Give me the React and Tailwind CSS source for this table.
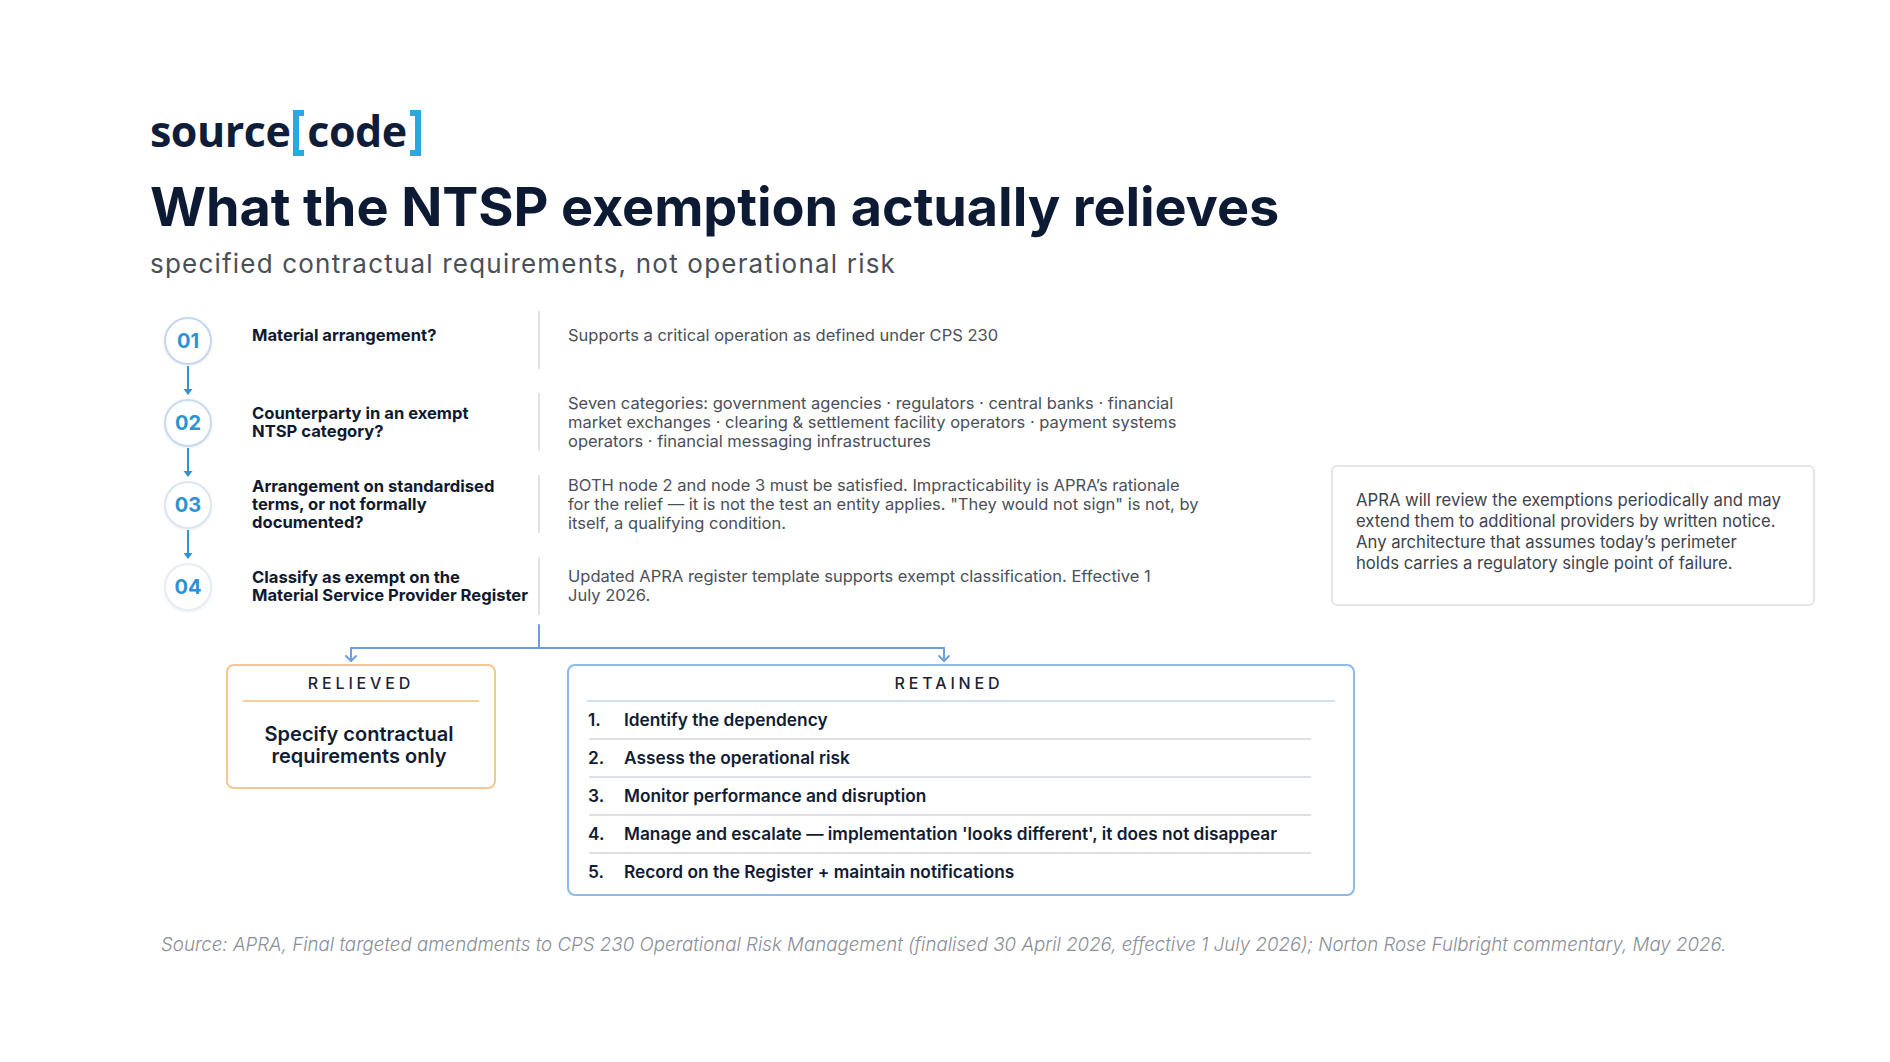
const steps = [
  {
    n: "01",
    ring: "border-[#c3d8ee]",
    shift: "pb-[10px]",
    label: ["Material arrangement?"],
    desc: ["Supports a critical operation as defined under CPS 230"],
  },
  {
    n: "02",
    ring: "border-[#c8daee]",
    shift: "",
    label: ["Counterparty in an exempt", "NTSP category?"],
    desc: [
      "Seven categories: government agencies · regulators · central banks · financial",
      "market exchanges · clearing & settlement facility operators · payment systems",
      "operators · financial messaging infrastructures",
    ],
  },
  {
    n: "03",
    ring: "border-[#dde6f0]",
    shift: "",
    label: ["Arrangement on standardised", "terms, or not formally", "documented?"],
    desc: [
      "BOTH node 2 and node 3 must be satisfied. Impracticability is APRA’s rationale",
      "for the relief — it is not the test an entity applies. \"They would not sign\" is not, by",
      "itself, a qualifying condition.",
    ],
  },
  {
    n: "04",
    ring: "border-[#e8edf3]",
    shift: "",
    label: ["Classify as exempt on the", "Material Service Provider Register"],
    desc: ["Updated APRA register template supports exempt classification. Effective 1", "July 2026."],
  },
];

const retained = [
  "Identify the dependency",
  "Assess the operational risk",
  "Monitor performance and disruption",
  "Manage and escalate — implementation 'looks different', it does not disappear",
  "Record on the Register + maintain notifications",
];

function Lines({ lines }) {
  return lines.map((l, i) => (
    <span key={i} className="block whitespace-nowrap">
      {l}
    </span>
  ));
}

function DownArrow() {
  return (
    <svg width="12" height="34" viewBox="0 0 12 34" className="block">
      <line x1="6" y1="1" x2="6" y2="25" stroke="#2f93d3" strokeWidth="2" />
      <polygon points="1.5,24 10.5,24 6,30" fill="#2f93d3" />
    </svg>
  );
}

function Logo() {
  return (
    <div className="flex h-[46px] items-center font-['Open_Sans',sans-serif] text-[43px] font-bold leading-none tracking-[-0.5px] text-[#0f1d3a]">
      <span className="pb-[6px]">source</span>
      <span className="mx-[3px] h-[46px] w-[11px] border-y-[6px] border-l-[6px] border-[#29a9e1]" />
      <span className="pb-[6px]">code</span>
      <span className="ml-[3px] h-[46px] w-[11px] border-y-[6px] border-r-[6px] border-[#29a9e1]" />
    </div>
  );
}

export default function App() {
  return (
    <div className="h-[1062px] w-[1890px] overflow-hidden bg-white pl-[150px] pt-[110px] font-['Inter','Noto_Sans',sans-serif] text-[#0f1d3a]">
      <Logo />

      <h1 className="mt-[24px] whitespace-nowrap text-[54px] font-bold leading-none tracking-[-0.1px] text-[#0d1a33]">
        What the NTSP exemption actually relieves
      </h1>
      <p className="mt-[17px] whitespace-nowrap text-[26px] leading-none tracking-[1.2px] text-[#4a4f57]">
        specified contractual requirements, not operational risk
      </p>

      <div className="mt-[34px] ml-[14px] flex items-start">
        <div className="w-[1167px] shrink-0">
          {/* numbered flow */}
          <div className="flex">
            <div className="flex w-[48px] flex-col items-center pt-[6px]">
              {steps.map((s, i) => (
                <div key={s.n} className="flex flex-col items-center">
                  <div
                    className={`flex h-[48px] w-[48px] items-center justify-center rounded-full border-2 bg-white text-[20px] font-bold text-[#2b93d4] shadow-[0_1px_3px_rgba(15,29,58,0.08)] ${s.ring}`}
                  >
                    {s.n}
                  </div>
                  {i < steps.length - 1 && <DownArrow />}
                </div>
              ))}
            </div>

            <div className="ml-[40px] flex flex-col gap-[24px]">
              {steps.map((s) => (
                <div key={s.n} className="flex h-[58px] items-stretch">
                  <div className={`flex w-[286px] items-center text-[16.6px] font-bold leading-[18px] text-[#0f1a30] ${s.shift}`}>
                    <div>
                      <Lines lines={s.label} />
                    </div>
                  </div>
                  <div className="w-[2px] bg-[#dfe3e8]" />
                  <div className={`flex items-center pl-[28px] text-[16.5px] leading-[19px] text-[#4b5058] ${s.shift}`}>
                    <div>
                      <Lines lines={s.desc} />
                    </div>
                  </div>
                </div>
              ))}
            </div>
          </div>

          {/* split connector */}
          <svg width="1100" height="49" viewBox="0 0 1100 49" className="ml-[62px] block">
            <g stroke="#6d9fde" strokeWidth="2" fill="none" strokeLinecap="round" strokeLinejoin="round">
              <line x1="313" y1="10" x2="313" y2="33" />
              <line x1="125" y1="33" x2="718" y2="33" />
              <line x1="125" y1="33" x2="125" y2="46" />
              <polyline points="120,41 125,46 130,41" />
              <line x1="718" y1="33" x2="718" y2="46" />
              <polyline points="713,41 718,46 723,41" />
            </g>
          </svg>

          {/* outcome boxes */}
          <div className="ml-[62px] flex items-start">
            <div className="flex h-[125px] w-[270px] shrink-0 flex-col rounded-[8px] border-2 border-[#f4c98f] bg-white">
              <div className="flex h-[34px] items-center justify-center text-[16px] font-medium tracking-[0.24em] text-[#1c2333]">
                RELIEVED
              </div>
              <div className="mx-[15px] h-[2px] bg-[#f4cf9c]" />
              <div className="flex flex-1 items-center justify-center pr-[4px] text-center text-[20px] font-semibold leading-[22px] text-[#111c33]">
                <div>
                  Specify contractual
                  <br />
                  requirements only
                </div>
              </div>
            </div>

            <div className="ml-[71px] flex h-[232px] w-[788px] shrink-0 flex-col rounded-[8px] border-2 border-[#8fb9ea] bg-white">
              <div className="flex h-[34px] items-center justify-center pr-[24px] text-[16px] font-medium tracking-[0.24em] text-[#1c2333]">
                RETAINED
              </div>
              <div className="mx-[18px] h-[2px] bg-[#cfe0f4]" />
              <ol>
                {retained.map((t, i) => (
                  <li key={t}>
                    {i > 0 && <div className="ml-[20px] mr-[42px] h-[2px] bg-[#dcdfe3]" />}
                    <div className="flex h-[36px] items-center pl-[19px] text-[17.3px] font-semibold text-[#111c33]">
                      <span className="w-[36px]">{i + 1}.</span>
                      <span className="whitespace-nowrap">{t}</span>
                    </div>
                  </li>
                ))}
              </ol>
            </div>
          </div>
        </div>

        <div className="mt-[154px] flex h-[141px] w-[484px] shrink-0 items-center rounded-[6px] border-2 border-[#e2e5e9] px-[23px] pb-[8px] text-[16.7px] leading-[21px] text-[#3d434c]">
          <div>
            <Lines
              lines={[
                "APRA will review the exemptions periodically and may",
                "extend them to additional providers by written notice.",
                "Any architecture that assumes today’s perimeter",
                "holds carries a regulatory single point of failure.",
              ]}
            />
          </div>
        </div>
      </div>

      <p className="mt-[40px] ml-[11px] whitespace-nowrap text-[18.7px] font-light italic leading-none text-[#8a8f98]">
        Source: APRA, Final targeted amendments to CPS 230 Operational Risk Management (finalised 30 April 2026, effective 1
        July 2026); Norton Rose Fulbright commentary, May 2026.
      </p>
    </div>
  );
}
